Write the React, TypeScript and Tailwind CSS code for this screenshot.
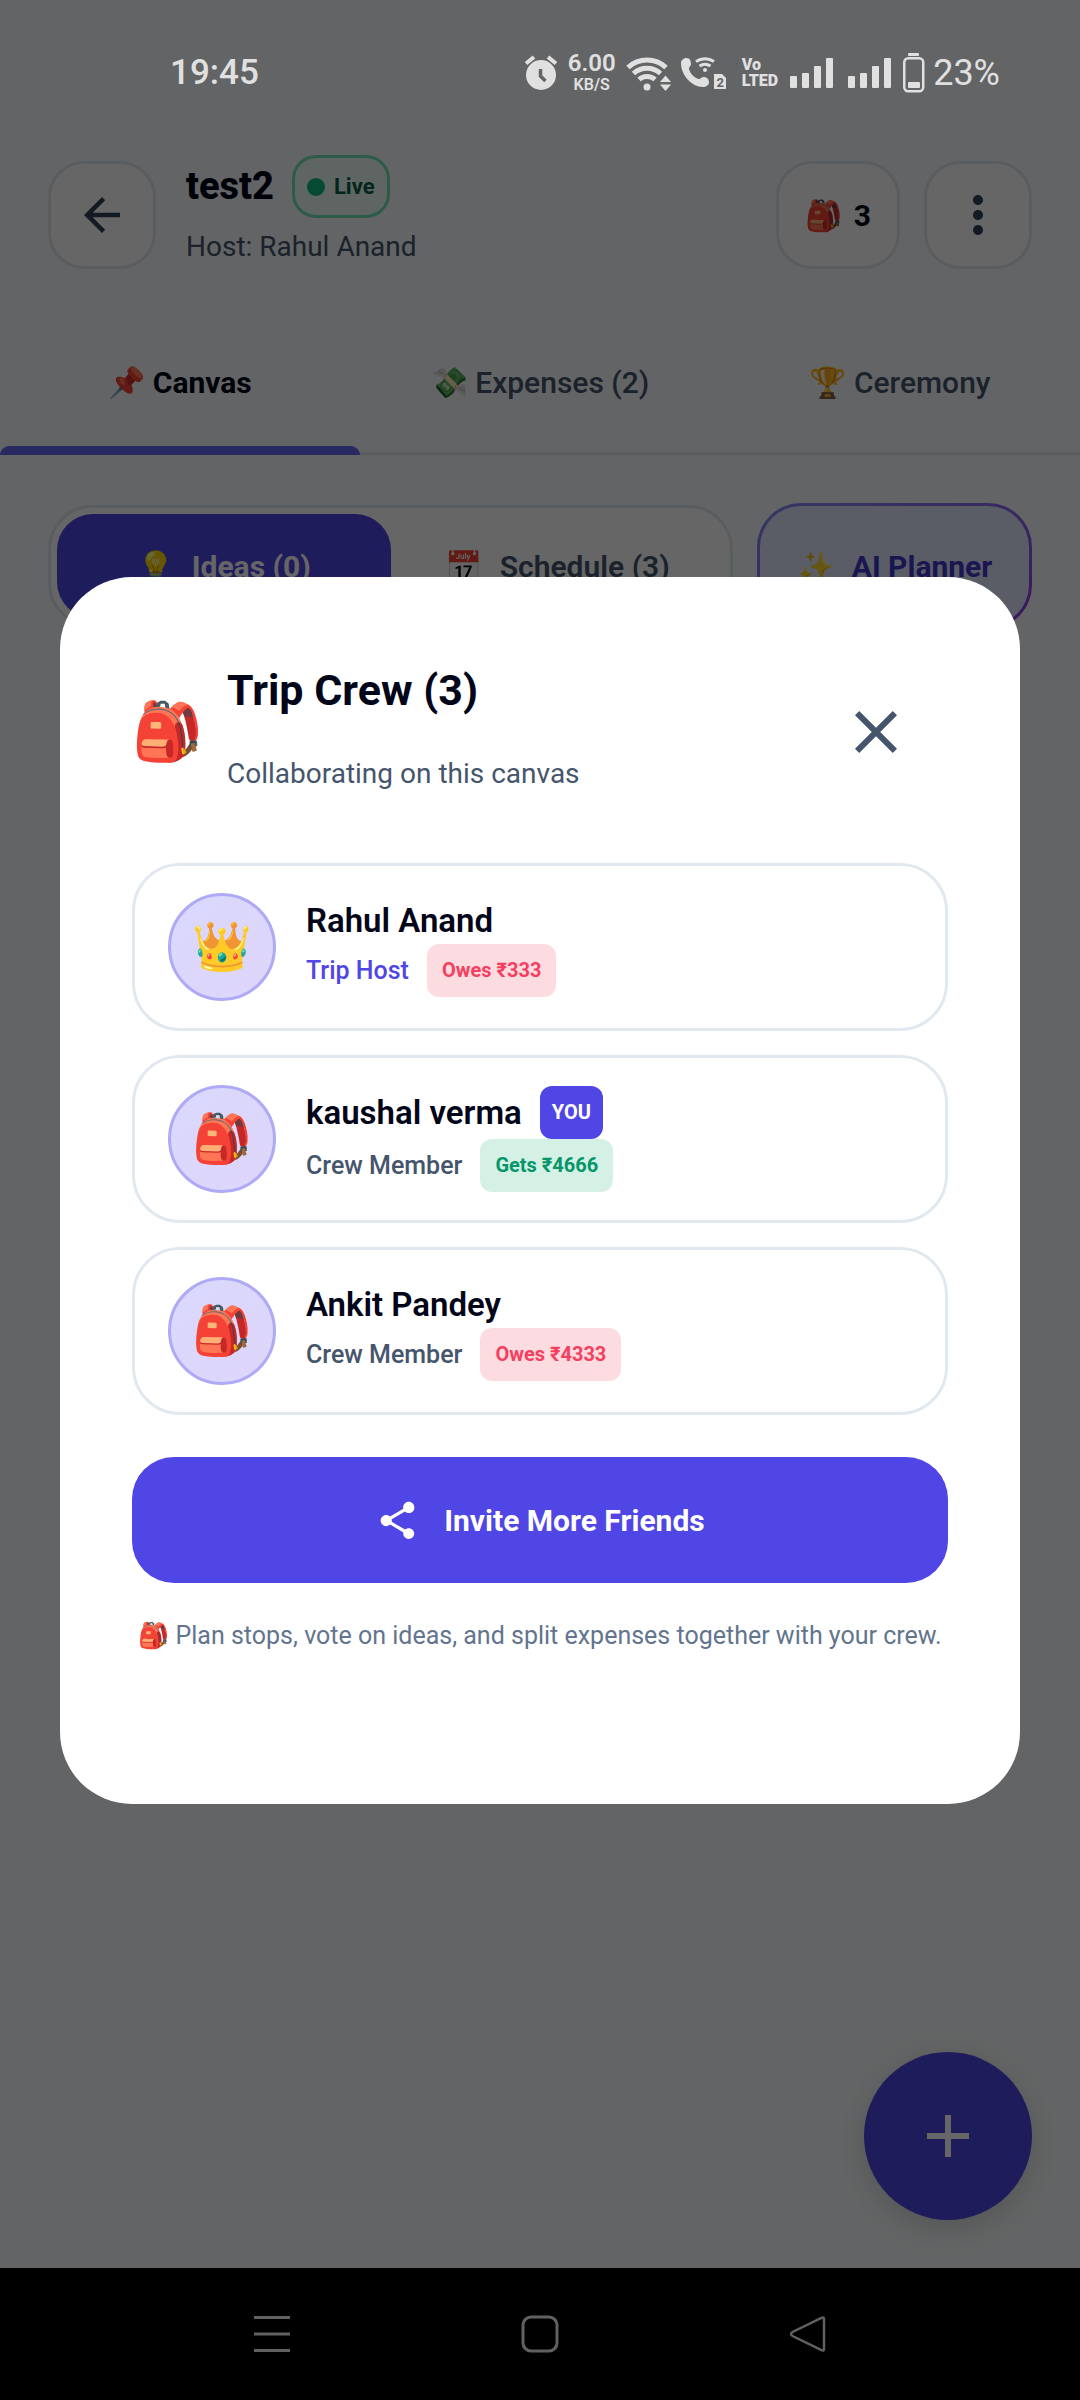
import clsx from "clsx";
import {
  MdAdd,
  MdArrowBack,
  MdClose,
  MdMoreVert,
  MdShare,
} from "react-icons/md";

type Member = {
  name: string;
  role: string;
  emoji: string;
  balance: string;
  owes: boolean;
  host?: boolean;
  you?: boolean;
};

const members: Member[] = [
  { name: "Rahul Anand", role: "Trip Host", emoji: "👑", balance: "Owes ₹333", owes: true, host: true },
  { name: "kaushal verma", role: "Crew Member", emoji: "🎒", balance: "Gets ₹4666", owes: false, you: true },
  { name: "Ankit Pandey", role: "Crew Member", emoji: "🎒", balance: "Owes ₹4333", owes: true },
];

const tabs = ["📌 Canvas", "💸 Expenses (2)", "🏆 Ceremony"];

function Signal() {
  return (
    <svg width="43" height="30" viewBox="0 0 43 30" fill="currentColor">
      <rect x="0" y="18" width="7" height="12" rx="1" />
      <rect x="12" y="15" width="7" height="15" rx="1" />
      <rect x="24" y="8" width="7" height="22" rx="1" />
      <rect x="36" y="0" width="7" height="30" rx="1" />
    </svg>
  );
}

function StatusBar() {
  return (
    <div className="pointer-events-none absolute inset-x-0 top-0 z-20 flex h-[113px] items-center justify-between pt-8 pr-20 pl-[170px] text-[#e0e0e0]">
      <span className="text-[35px] leading-9 font-medium">19:45</span>
      <div className="flex items-center">
        <svg width="34" height="36" viewBox="0 0 34 36" fill="none">
          <circle cx="17" cy="20" r="15" fill="currentColor" />
          <path d="M2 8.500L10 2M32 8.500L24 2" stroke="currentColor" strokeWidth="4" />
          <path d="M16.500 14v7l5 5" stroke="#636466" strokeWidth="3.500" />
        </svg>
        <div className="ml-2 flex w-[52px] flex-col items-center font-semibold">
          <span className="text-[24px] leading-6">6.00</span>
          <span className="text-[16px] leading-5">KB/S</span>
        </div>
        <svg className="ml-2" width="46" height="36" viewBox="0 0 46 36" fill="none">
          <path d="M2 12.500a28 28 0 0 1 38 0" stroke="currentColor" strokeWidth="5" />
          <path d="M7.500 18.500a20 20 0 0 1 27 0" stroke="currentColor" strokeWidth="5" />
          <path d="M13 24.500a12 12 0 0 1 16 0" stroke="currentColor" strokeWidth="5" />
          <circle cx="21" cy="32" r="3.500" fill="currentColor" />
          <path d="M34 27l5.500-6.500L45 27zM34 29.500l5.500 6.500 5.500-6.500z" fill="currentColor" />
        </svg>
        <svg className="ml-2" width="46" height="36" viewBox="0 0 46 36" fill="none">
          <path
            d="M1 8C1 5 4 3 6.500 3c3.500 0 4.500 3 4.500 6 0 2.500-2.500 3-2 5 1.500 5 5 8.500 9.500 10 2 .6 2.500-2 5-2 3 0 5.500 2 5.500 5 0 3.500-3 5-6 5C11.500 32 1 20 1 8z"
            fill="currentColor"
          />
          <path d="M16 6.500a16 16 0 0 1 18 0M19.500 11a10 10 0 0 1 11 0" stroke="currentColor" strokeWidth="3" />
          <circle cx="25" cy="15" r="2" fill="currentColor" />
          <path d="M34 19h8l4 4v11H34z" fill="currentColor" />
          <text x="36.500" y="32" fontSize="13" fontWeight="700" fill="#636466">
            2
          </text>
        </svg>
        <div className="ml-4 flex flex-col text-[16px] leading-4 font-black">
          <span>Vo</span>
          <span>LTED</span>
        </div>
        <div className="ml-3 flex gap-[15px]">
          <Signal />
          <Signal />
        </div>
        <svg className="ml-3" width="22" height="40" viewBox="0 0 22 40" fill="none">
          <rect x="5" y="0" width="11" height="3" rx="1" fill="currentColor" />
          <rect x="1.250" y="5.250" width="19" height="33" rx="4" stroke="currentColor" strokeWidth="2.500" />
          <rect x="5" y="29" width="12" height="6" rx="1" fill="currentColor" />
        </svg>
        <span className="ml-2 text-[36px] leading-9">23%</span>
      </div>
    </div>
  );
}

function Header() {
  return (
    <header className="flex items-center px-12 py-[42px]">
      <button
        aria-label="Back"
        className="flex size-[108px] items-center justify-center rounded-[36px] border-3 border-slate-200 bg-white text-slate-700"
      >
        <MdArrowBack size={54} />
      </button>
      <div className="ml-[30px] flex-1">
        <div className="flex items-center gap-[18px]">
          <h1 className="text-[38px] leading-[63px] font-extrabold text-slate-950">test2</h1>
          <span className="flex h-[63px] items-center gap-[9px] rounded-3xl border-3 border-[#6ee7b7] bg-[#ecfdf5] px-3 text-[22px] font-bold text-[#065f46]">
            <span className="size-[18px] rounded-full bg-[#10b981]" />
            Live
          </span>
        </div>
        <p className="text-[28px] leading-[57px] text-slate-600">Host: Rahul Anand</p>
      </div>
      <div className="flex gap-6">
        <button className="flex h-[108px] items-center gap-3 rounded-[36px] border-3 border-slate-200 bg-white px-[26px] text-[30px] font-bold text-slate-950">
          <span>🎒</span>
          <span>3</span>
        </button>
        <button
          aria-label="More options"
          className="flex size-[108px] items-center justify-center rounded-[36px] border-3 border-slate-200 bg-white text-slate-700"
        >
          <MdMoreVert size={60} />
        </button>
      </div>
    </header>
  );
}

function Tabs() {
  return (
    <nav className="grid grid-cols-3">
      {tabs.map((tab, i) => (
        <button
          key={tab}
          className={clsx(
            "flex h-[138px] flex-col text-[30px]",
            i === 0 ? "font-bold text-slate-950" : "font-medium text-slate-600",
          )}
        >
          <span className="flex flex-1 items-center self-center pt-0.5">{tab}</span>
          <span className={clsx("flex h-[9px] w-full flex-col justify-end", i === 0 && "rounded-t-[9px] bg-[#6366f1]")}>
            {i > 0 && <span className="h-[3px] bg-slate-200" />}
          </span>
        </button>
      ))}
    </nav>
  );
}

function Toolbar() {
  return (
    <div className="flex items-center gap-6 px-12 pt-12 text-[30px] font-bold">
      <div className="grid flex-1 grid-cols-2 rounded-[44px] border-3 border-slate-200 bg-white p-1.5">
        <button className="flex h-[104px] items-center justify-center gap-[18px] rounded-[36px] bg-[#4f46e5] text-white">
          <span>💡</span>
          <span>Ideas (0)</span>
        </button>
        <button className="flex h-[104px] items-center justify-center gap-[18px] rounded-[36px] font-semibold text-slate-600">
          <span>📅</span>
          <span>Schedule (3)</span>
        </button>
      </div>
      <button className="h-[126px] w-[275px] rounded-[44px] bg-linear-to-br from-[#818cf8] to-[#9333ea] p-[3px]">
        <span className="flex h-full items-center justify-center gap-[18px] rounded-[41px] bg-[#e0e7ff] text-[#4338ca]">
          <span>✨</span>
          <span>AI Planner</span>
        </span>
      </button>
    </div>
  );
}

function MemberRow({ member }: { member: Member }) {
  return (
    <li className="flex h-[168px] items-center gap-[30px] rounded-[48px] border-3 border-slate-200 px-[33px]">
      <div className="flex size-[108px] items-center justify-center rounded-full border-3 border-[#aeaaf6] bg-linear-to-br from-[#d9d9fd] to-[#dfd5fa] text-[48px]">
        {member.emoji}
      </div>
      <div>
        <div className="flex items-center gap-[18px]">
          <strong className="text-[33px] leading-[47px] font-semibold text-slate-950">{member.name}</strong>
          {member.you && (
            <span className="rounded-xl bg-[#4f46e5] px-3 text-[20px] leading-[53px] font-bold text-white">YOU</span>
          )}
        </div>
        <div className="flex items-center gap-[18px]">
          <span className={clsx("text-[25px] font-medium", member.host ? "text-[#4f46e5]" : "text-slate-600")}>
            {member.role}
          </span>
          <span
            className={clsx(
              "rounded-xl px-[15px] text-[20px] leading-[53px] font-bold",
              member.owes ? "bg-[#fddce1] text-[#f43f5e]" : "bg-[#d5f1e6] text-[#059669]",
            )}
          >
            {member.balance}
          </span>
        </div>
      </div>
    </li>
  );
}

function CrewDialog() {
  return (
    <div className="absolute inset-0 z-10 flex items-center bg-black/60 px-[60px] pt-[113px] pb-[132px]">
      <section
        role="dialog"
        aria-labelledby="crew-title"
        className="min-w-0 flex-1 rounded-[72px] bg-white p-[72px]"
      >
        <div className="flex items-center">
          <span className="text-[57px]">🎒</span>
          <div className="ml-6 flex-1 leading-[83px]">
            <h2 id="crew-title" className="text-[43px] font-bold text-slate-950">
              Trip Crew (3)
            </h2>
            <p className="text-[28px] text-slate-600">Collaborating on this canvas</p>
          </div>
          <button aria-label="Close" className="flex size-36 items-center justify-center text-slate-600">
            <MdClose size={72} />
          </button>
        </div>
        <ul className="mt-12 flex flex-col gap-6">
          {members.map((member) => (
            <MemberRow key={member.name} member={member} />
          ))}
        </ul>
        <button className="mt-[42px] flex h-[126px] w-full items-center justify-center gap-6 rounded-[42px] bg-[#4f46e5] text-[30px] font-bold text-white">
          <MdShare size={45} />
          Invite More Friends
        </button>
        <p className="mt-6 h-[125px] text-center text-[25px] leading-[58px] text-slate-500">
          🎒 Plan stops, vote on ideas, and split expenses together with your crew.
        </p>
      </section>
    </div>
  );
}

function NavBar() {
  return (
    <nav className="flex h-[132px] items-center justify-center gap-[230px] bg-black text-[#f2f2f2]">
      <button aria-label="Recent apps">
        <svg width="38" height="38" viewBox="0 0 38 38" stroke="currentColor" strokeWidth="3">
          <path d="M1 2.500h36M1 19h36M1 35.500h36" />
        </svg>
      </button>
      <button aria-label="Home">
        <svg width="38" height="38" viewBox="0 0 38 38" fill="none" stroke="currentColor" strokeWidth="3">
          <rect x="2" y="2" width="34" height="34" rx="8" />
        </svg>
      </button>
      <button aria-label="Go back">
        <svg width="38" height="38" viewBox="0 0 38 38" fill="none" stroke="currentColor" strokeWidth="2.500">
          <path d="M32.500 2.800L3.500 17q-3 2 0 4l29 14.200q2.500 1 2.500-1.500V4.300q0-2.500-2.500-1.500z" />
        </svg>
      </button>
    </nav>
  );
}

export default function App() {
  return (
    <div className="relative flex min-h-screen flex-col bg-slate-50 pt-[113px] font-[Roboto,'Noto_Sans',sans-serif]">
      <Header />
      <Tabs />
      <Toolbar />
      <div className="flex flex-1 items-end justify-end px-12 pb-12">
        <button
          aria-label="Add"
          className="flex size-[168px] items-center justify-center rounded-full bg-[#4f46e5] text-white shadow-[0_8px_30px_rgba(0,0,0,0.15)]"
        >
          <MdAdd size={72} />
        </button>
      </div>
      <NavBar />
      <CrewDialog />
      <StatusBar />
    </div>
  );
}
